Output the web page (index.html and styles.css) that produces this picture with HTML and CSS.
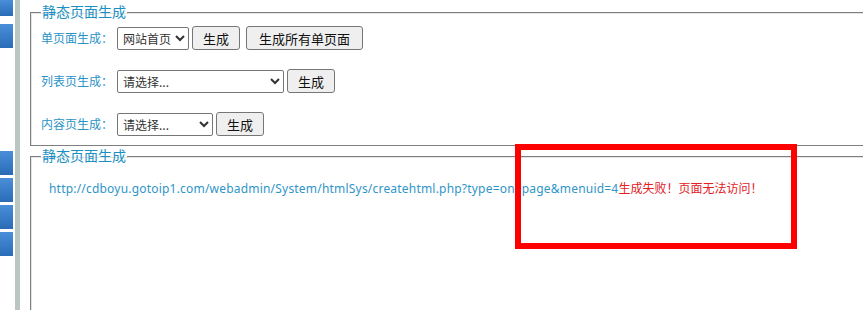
FILE: index.html
```html
<!DOCTYPE html>
<html>

<head>
    <title>静态页面生成</title>
    <link rel="stylesheet" href="styles.css">
</head>

<body>
    <div class="layout">
        <div class="sidebar">
            <div class="nav-block first"></div>
            <div class="nav-block"></div>
            <div class="nav-block group-start"></div>
            <div class="nav-block"></div>
            <div class="nav-block"></div>
            <div class="nav-block"></div>
        </div>
        <div class="divider"></div>

        <div class="main">
            <fieldset class="panel">
                <legend>静态页面生成</legend>
                <div class="form-row">
                    <label>单页面生成：</label>
                    <select class="sel-page">
                        <option>网站首页</option>
                    </select>
                    <button>生成</button>
                    <button class="btn-all">生成所有单页面</button>
                </div>
                <div class="form-row">
                    <label>列表页生成：</label>
                    <select class="sel-list">
                        <option>请选择...</option>
                    </select>
                    <button>生成</button>
                </div>
                <div class="form-row">
                    <label>内容页生成：</label>
                    <select class="sel-content">
                        <option>请选择...</option>
                    </select>
                    <button>生成</button>
                </div>
            </fieldset>

            <fieldset class="panel result">
                <legend>静态页面生成</legend>
                <div class="log">
                    <span class="url">http://cdboyu.gotoip1.com/webadmin/System/htmlSys/createhtml.php?type=onepage&amp;menuid=4</span><span class="fail">生成失败！页面无法访问！</span>
                </div>
            </fieldset>
        </div>
    </div>

    <!-- annotation box drawn over the screenshot -->
    <div class="highlight"></div>
</body>

</html>
```

FILE: styles.css
```css
html, body {
    margin: 0;
    padding: 0;
    height: 100%;
    overflow: hidden;
    background-color: #fff;
}

body {
    position: relative;
    font-family: "Noto Sans", "Noto Sans CJK SC", sans-serif;
    font-size: 12px;
    color: #1f8cc0;
}

.layout {
    display: flex;
    height: 100%;
}

.sidebar {
    flex-shrink: 0;
    width: 13px;
    margin-right: 2px;
    display: flex;
    flex-direction: column;
    gap: 3px;
}

.nav-block {
    height: 24px;
    background: linear-gradient(to bottom, #4a8fd8, #2b6bb6);
}

.nav-block.first {
    height: 16px;
    margin-bottom: 5px;
}

.nav-block.group-start {
    margin-top: 100px;
}

.divider {
    flex-shrink: 0;
    width: 5px;
    background-color: #b9c6c1;
}

.main {
    flex: 1;
    min-width: 0;
    display: flex;
    flex-direction: column;
    padding-left: 10px;
    padding-top: 4px;
}

.panel {
    margin: 0 0 2px 0;
    padding: 6px 10px 9px 10px;
    border: 1px solid #7f7f7f;
    border-right: none;
    box-shadow: inset 1px 1px 0 #e3e3e3;
}

.panel legend {
    padding: 0 1px;
    font-size: 14px;
    line-height: 16px;
    color: #1a8fc4;
}

.form-row {
    display: flex;
    align-items: center;
    height: 24px;
    margin-bottom: 19px;
}

.form-row:last-child {
    margin-bottom: 0;
}

.form-row label {
    width: 76px;
    color: #2a93c6;
}

select {
    height: 23px;
    margin: 0 3px 0 0;
    padding: 0 0 0 1px;
    border: 1px solid #767676;
    border-radius: 2px;
    background-color: #fff;
    font-family: "Noto Sans CJK SC", sans-serif;
    font-size: 12px;
    color: #333;
}

.sel-page {
    width: 72px;
}

.sel-list {
    width: 167px;
}

.sel-content {
    width: 96px;
}

button {
    height: 24px;
    padding: 0 10px;
    margin-right: 6px;
    border: 1px solid #767676;
    border-radius: 3px;
    background-color: #efefef;
    font-family: "Noto Sans CJK SC", sans-serif;
    font-size: 13px;
    color: #111;
}

.btn-all {
    padding: 0 12px;
}

.result {
    flex: 1;
    margin-bottom: 0;
    border-bottom: none;
    padding-top: 17px;
}

.log {
    padding-left: 8px;
    line-height: 16px;
    white-space: nowrap;
}

.url {
    color: #2f95c8;
    letter-spacing: 0.2px;
}

.fail {
    color: #e3201f;
}

.highlight {
    position: absolute;
    left: 515px;
    top: 144px;
    width: 270px;
    height: 93px;
    border: 6px solid #ff0000;
}
```
